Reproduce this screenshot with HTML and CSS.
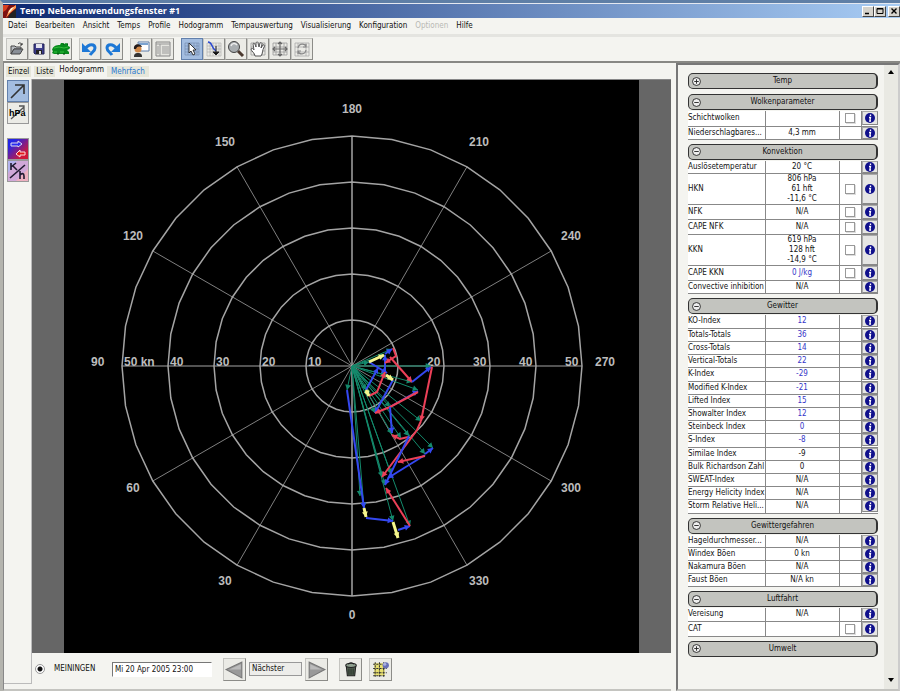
FILE: index.html
```html
<!DOCTYPE html>
<html lang="de">
<head>
<meta charset="utf-8">
<title>Temp Nebenanwendungsfenster #1</title>
<link rel="stylesheet" href="styles.css">
</head>
<body>
<header class="titlebar">
  <svg class="app-icon" viewBox="0 0 13 13" aria-hidden="true"><rect width="13" height="13" fill="#7c1010"/><path d="M0 0h6L3 5 0 7z" fill="#d84020"/><path d="M3 13 6 5l7-5v3L7 8z" fill="#ff9a50"/><path d="M5 8 8 3l3-1-4 5z" fill="#fff4d8"/><path d="M7 9l6-5v9H5z" fill="#222"/></svg>
  <h1>Temp Nebenanwendungsfenster #1</h1>
  <div class="win-buttons">
    <button aria-label="Minimieren"><svg viewBox="0 0 10 8"><path d="M2 6.500h4" stroke="#000" stroke-width="1.500"/></svg></button>
    <button aria-label="Maximieren"><svg viewBox="0 0 10 8"><path d="M2 1.500h6v5H2zM2 2h6" fill="none" stroke="#000"/></svg></button>
    <button aria-label="Schließen"><svg viewBox="0 0 10 8"><path d="M2.500 1.500l5 5m0-5l-5 5" stroke="#000" stroke-width="1.400"/></svg></button>
  </div>
</header>
<nav class="menubar">
  <button>Datei</button><button>Bearbeiten</button><button>Ansicht</button><button>Temps</button><button>Profile</button><button>Hodogramm</button><button>Tempauswertung</button><button>Visualisierung</button><button>Konfiguration</button><button disabled>Optionen</button><button>Hilfe</button>
</nav>
<div class="toolbar">
  <div class="group">
    <button aria-label="Öffnen"><svg viewBox="0 0 20 20"><path d="M4 7h4l1 1h5v2H7l-3 5z" fill="#b8bcc0" stroke="#444"/><path d="M4 15l3-5h9l-3 5z" fill="#8a9098" stroke="#444"/><path d="M11 5c2-2 3-1 4 1m0-2v2h-2" fill="none" stroke="#333"/></svg></button>
    <button aria-label="Speichern"><svg viewBox="0 0 20 20"><path d="M5 5h10v10H6l-1-1z" fill="#3c3c8c" stroke="#222255"/><path d="M7 5h6v4H7z" fill="#e4e4ee"/><path d="M7 11h6v4H7z" fill="#222"/><path d="M10 12h2v3h-2z" fill="#ddd"/></svg></button>
    <button aria-label="Frosch"><svg viewBox="0 0 20 20"><path d="M1 11c1-4 4-5 8-5l1-2h2l1 1 2-1 2 1v2l2 1c0 2-1 2-3 3l2 2v2H3l-2-1 1-2z" fill="#078a1c"/><path d="M3 9l5-1 5 1 4-1M3 13h3m3 0h4" stroke="#35bd3d" fill="none"/><path d="M12 5h1m3 0h1M6 15h2m4 0h2" stroke="#003c08"/></svg></button>
  </div>
  <div class="group">
    <button aria-label="Rückgängig"><svg viewBox="0 0 20 20"><path d="M5 10c4-6 10-5 10-1 0 3-3 4-5 7" fill="none" stroke="#1d78d6" stroke-width="3"/><path d="M2 4v9h9z" fill="#1d78d6"/></svg></button>
    <button aria-label="Wiederherstellen"><svg viewBox="0 0 20 20"><path d="M15 10C11 4 5 5 5 9c0 3 3 4 5 7" fill="none" stroke="#1d78d6" stroke-width="3"/><path d="M18 4v9H9z" fill="#1d78d6"/></svg></button>
  </div>
  <div class="group">
    <button aria-label="Präsentation"><svg viewBox="0 0 20 20"><path d="M7 3h11v9H8z" fill="#fff" stroke="#5d7da8"/><path d="M8 4h9v2H8z" fill="#7ba3d0"/><path d="M3 18c0-3 1-4 4-4s4 1 4 4z" fill="#333"/><circle cx="7" cy="10" r="3.500" fill="#d08848"/><path d="M3 10c-1-6 7-6 8-2-3-1-5-1-6 2z" fill="#231a18"/></svg></button>
    <button aria-label="Tabelle"><svg viewBox="0 0 20 20"><path d="M3 3h14v14H3z" fill="#e4e4df" stroke="#888"/><path d="M3 5h14M7 5v12M9 8h7M9 10h7M9 12h7M9 14h7M4 8h2m-2 2h2m-2 2h2m-2 2h2" stroke="#999"/></svg></button>
  </div>
  <div class="group modes">
    <button class="active" aria-label="Auswahl"><svg viewBox="0 0 20 20"><path d="M3 4h14v12H3zM3 7h14M3 10h14M3 13h14M6 4v12M9 4v12M12 4v12M15 4v12" fill="none" stroke="#7187a8" stroke-width=".6"/><path d="M7 4v10l2-2 2 4 2-1-2-4h3z" fill="#fff" stroke="#222" stroke-width=".9"/></svg></button>
    <button aria-label="Kurve verschieben"><svg viewBox="0 0 20 20"><path d="M3 4h14v13H3zM3 7h14M3 10h14M3 13h14M6 4v13M9 4v13M12 4v13M15 4v13" fill="none" stroke="#aaa" stroke-width=".6"/><path d="M4 3c5 0 2 5 8 9" fill="none" stroke="#2a48d0" stroke-width="1.500"/><path d="M12 7v7M9 13h6l-3 3z" fill="#111" stroke="#222"/></svg></button>
    <button aria-label="Zoom"><svg viewBox="0 0 20 20"><path d="M12 12l5 5" stroke="#4b3930" stroke-width="3"/><circle cx="8" cy="8" r="5.500" fill="#a8adb0" stroke="#444"/><path d="M5 7c1-3 4-3 6-1" fill="none" stroke="#eee" stroke-width="1.500"/></svg></button>
    <button aria-label="Hand"><svg viewBox="0 0 20 20"><path d="M3 4h14v12H3zM3 8h14M3 12h14M6 4v12M14 4v12" fill="none" stroke="#999" stroke-width=".8"/><path d="M7 17c0-3-4-5-4-7 1-2 3 1 3 1L5 5c1-2 2 0 3 3V4c1-2 2-1 2 0l1 4 1-4c1-1 2 0 2 1l-1 4 2-3c2-1 2 1 1 2-2 4-1 6-3 9z" fill="#fff" stroke="#444" stroke-width=".9"/></svg></button>
    <button aria-label="Verschieben"><svg viewBox="0 0 20 20"><path d="M3 4h14v12H3zM3 8h14M3 13h14M6 4v12M14 4v12" fill="none" stroke="#999" stroke-width=".8"/><path d="M10 3v14M3 10h14M8 5l2-2 2 2M8 15l2 2 2-2M5 8l-2 2 2 2m10-4 2 2-2 2" fill="none" stroke="#666" stroke-width="1.200"/></svg></button>
    <button aria-label="Drehen"><svg viewBox="0 0 20 20"><path d="M3 4h14v13H3zM3 8h14M3 13h14M6 4v13M14 4v13" fill="none" stroke="#aaa" stroke-width=".8"/><path d="M6 9c1-5 7-5 8-1m0-3v3h-3M14 11c-1 5-7 5-8 1m0 3v-3h3" fill="none" stroke="#888" stroke-width="1.200"/></svg></button>
  </div>
</div>
<main class="workspace">
  <section class="left">
    <div class="tabs" role="tablist">
      <button role="tab">Einzel</button><button role="tab">Liste</button><button role="tab" class="current" aria-selected="true">Hodogramm</button><button role="tab" class="blue">Mehrfach</button>
    </div>
    <div class="view">
      <div class="sidebar">
        <button class="active" aria-label="Windpfeil"><svg viewBox="0 0 20 20"><path d="M3 17 16 4M7 4h9v9" fill="none" stroke="#333" stroke-width="1.600"/></svg></button>
        <button aria-label="Druck in hPa"><svg viewBox="0 0 20 20"><path d="M3 16 16 4M11 3h5v5" fill="none" stroke="#555" stroke-width="1.300"/><text x="1" y="13" class="hpa">hPa</text></svg></button>
        <button class="colored gap" aria-label="Advektion"><svg viewBox="0 0 20 20"><defs><linearGradient id="adv" x1="0" y1="0" x2="1" y2="1"><stop offset="0.200" stop-color="#2424e4"/><stop offset="0.800" stop-color="#d01838"/></linearGradient></defs><path d="M0 0h20v20H0z" fill="url(#adv)"/><path d="M3 4h7V2l4 3-4 3V7H3z" fill="#2a2af0" stroke="#dde"/><path d="M17 13h-5v-2l-4 4 4 3v-2h5z" fill="#e01818" stroke="#fdd"/></svg></button>
        <button class="colored" aria-label="Kelvin pro Stunde"><svg viewBox="0 0 20 20"><path d="M0 0h20v20H0z" fill="#d0a8d8"/><path d="M0 0h9L0 12z" fill="#b4b4ee"/><path d="M20 20V8L8 20z" fill="#eeb0c0"/><path d="M3 2v7M3 6l5-4M5 5l4 4M2 17 17 4M12 10v8m0-4c2-2 4-2 4 1v3" fill="none" stroke="#201a30" stroke-width="1.600"/></svg></button>
      </div>
      <div class="plot">
        <div class="chart">
          <svg id="hodograph" viewBox="-288 -286 575 573" role="img" aria-label="Hodogramm"></svg>
        </div>
        <form class="controls">
          <label class="station"><input type="radio" name="station" checked>MEININGEN</label>
          <input class="date" type="text" value="Mi 20 Apr 2005 23:00" aria-label="Termin">
          <div class="stepper">
            <button type="button" class="square" aria-label="Zurück"><svg viewBox="0 0 20 20"><path d="M17 3v15L2 10z" fill="#999" stroke="#777"/><path d="M16 5v5H5z" fill="#bbb"/></svg></button>
            <button type="button" class="next">Nächster</button>
            <button type="button" class="square" aria-label="Vor"><svg viewBox="0 0 20 20"><path d="M3 3v15l15-8z" fill="#999" stroke="#777"/><path d="M4 5v5h11z" fill="#bbb"/></svg></button>
          </div>
          <button type="button" class="square" aria-label="Löschen"><svg viewBox="0 0 20 20"><path d="M6 7h9l-1 9H7z" fill="#526052" stroke="#222"/><ellipse cx="10.500" cy="6" rx="5" ry="2" fill="#8fa08f" stroke="#222"/><path d="M8.500 9v6m2-6v6m2-6v6" stroke="#263026"/><path d="M8 5c1-2 4-2 5 0" stroke="#222" fill="none"/></svg></button>
          <button type="button" class="square" aria-label="Karte"><svg viewBox="0 0 20 20"><path d="M4 4h10v12H4z" fill="#e8e070"/><path d="M3 5h11M3 9h13M3 13h13M3 16h11M5 3v14M9 3v14M13 3v14" stroke="#333" stroke-dasharray="2 1"/><circle cx="15" cy="6" r="3" fill="#6870b8"/><circle cx="14" cy="5" r="1.500" fill="#aab0e0"/></svg></button>
        </form>
      </div>
    </div>
  </section>
  <aside class="right">
    <div class="sections" id="sections"></div>
    <div class="scroll"><button aria-label="Nach oben"><svg viewBox="0 0 8 4"><path d="M1 4l3-4 3 4z"/></svg></button><button aria-label="Nach unten"><svg viewBox="0 0 8 4"><path d="M1 0l3 4 3-4z"/></svg></button></div>
  </aside>
</main>
<script src="app.js"></script>
</body>
</html>
```
FILE: styles.css
```css
* { box-sizing: border-box; }
body {
  margin: 0;
  min-height: 100vh;
  display: flex;
  flex-direction: column;
  background: #f4f4f0;
  border-top: 3px solid #5f7fa6;
  border-left: 3px solid #b4b4ae;
  color: #111;
  font: 8px/10px "DejaVu Sans Condensed", "DejaVu Sans", sans-serif;
}
button, input { font: inherit; color: inherit; margin: 0; }
button { padding: 0; border: 0; background: none; }
svg { display: block; }

.titlebar {
  display: flex;
  align-items: center;
  height: 15px;
  background: linear-gradient(90deg, #0c2870, #a8ccf4);
  border-top: 1px solid #e4e8f0;
}
.app-icon { width: 13px; height: 13px; }
.titlebar h1 {
  flex: 1;
  margin: 0 0 0 4px;
  color: #fff;
  font: bold 8px/12px "Open Sans", "DejaVu Sans Condensed", sans-serif;
  font-size: 9px;
}
.win-buttons { display: flex; }
.win-buttons button {
  width: 12px;
  height: 11px;
  background: #d6d3cc;
  border: 1px solid;
  border-color: #fff #444 #444 #fff;
}
.win-buttons button:last-child { margin-left: 2px; }

.menubar {
  display: flex;
  gap: 8px;
  height: 19px;
  padding: 0 5px;
  border-bottom: 3px solid #e4e4e0;
}
.menubar button:disabled { color: #b8b8b4; }

.toolbar {
  display: flex;
  gap: 7px;
  height: 26px;
  padding: 1px 3px;
  border-bottom: 2px solid #888884;
}
.group { display: flex; }
.group button, .square {
  width: 22px;
  height: 22px;
  padding: 0;
  background: #ebebe6;
  border: 1px solid;
  border-color: #c4c4c0 #8c8c88 #8c8c88 #c4c4c0;
}
.group button svg, .square svg { width: 100%; height: 100%; }
.group .active, .sidebar .active { background: #a3bde0; border-color: #6280ac; }

.workspace { flex: 1; display: flex; gap: 5px; }
.left { flex: 1; min-width: 0; display: flex; flex-direction: column; border-left: 1px solid #888; border-bottom: 2px solid #c4c4c0; }
.tabs { display: flex; align-items: flex-end; gap: 3px; height: 16px; padding: 0 2px 2px; }
.tabs button { height: 11px; padding: 0 2px; background: #e6e6da; }
.tabs .current { height: 14px; padding: 0 0 0 1px; background: none; }
.tabs .blue { padding: 0 4px; color: #2878d0; }
.view { flex: 1; display: flex; }
.sidebar { width: 28px; margin-bottom: 5px; padding: 1px 3px; border-right: 1px solid #bbb; border-bottom: 1px solid #bbb; }
.sidebar button {
  display: block;
  width: 22px;
  height: 22px;
  background: #ebebe6;
  border: 1px solid #999;
}
.sidebar .gap { margin-top: 14px; }
.sidebar svg { width: 100%; height: 100%; }
.hpa { font: bold 9px "Liberation Sans", sans-serif; }
.plot { flex: 1; min-width: 0; display: flex; flex-direction: column; }
.chart { flex: 1; display: flex; padding: 0 32px; background: #666; border-top: 1px solid #888; }
.chart svg { width: 100%; background: #000; }
.ring { fill: none; stroke: #a4a4a4; stroke-width: 1.5; }
.spoke { stroke: #a0a0a0; stroke-width: 0.8; }
.meridian { stroke: #a4a4a4; stroke-width: 1.5; }
.axis { stroke: #a4a4a4; }
.scale { fill: #bcbcbc; font: bold 12px "Liberation Sans", sans-serif; }
.middle { text-anchor: middle; }
.vector { fill: none; }
.green { stroke: #148a6c; stroke-width: 1; }
.shear { stroke-width: 2; }
.blue-line { stroke: #3448f0; }
.red-line { stroke: #ec4058; }
.yellow-line { stroke: #f6f68c; stroke-width: 3; }

.controls { display: flex; align-items: center; height: 36px; padding: 0 3px 4px; }
.station { display: flex; align-items: center; gap: 9px; width: 77px; }
.station input {
  appearance: none;
  width: 10px;
  height: 10px;
  border: 1px solid #999;
  border-radius: 50%;
  background: radial-gradient(#111 0 2px, #fff 3px);
}
.date { width: 100px; height: 15px; padding: 0 2px; background: #fff; border: 1px solid; border-color: #777 #fff #fff #777; }
.stepper { display: flex; align-items: center; gap: 3px; margin: 0 11px; }
.next { width: 53px; height: 14px; padding-left: 2px; text-align: left; background: #ededea; border: 1px solid #999; }
.controls .square { width: 23px; height: 23px; }
.controls > .square + .square { margin-left: 7px; }

.right { display: flex; width: 224px; border: 2px solid #777; border-right-color: #ccc; border-bottom-color: #c4c4c0; }
.sections { flex: 1; min-width: 0; padding: 8px 6px 0 10px; }
.section { margin-bottom: 4px; }
.section.closed { margin-bottom: 5px; }
.section-head {
  display: grid;
  grid-template-columns: 10px 1fr 10px;
  align-items: center;
  width: 100%;
  height: 16px;
  padding: 0 3px;
  background: #c3c4bf;
  border: 1px solid #333;
  border-right-width: 2px;
  border-radius: 5px;
}
.section-head svg { width: 9px; height: 9px; fill: #eee; stroke: #222; }
.params { width: 100%; margin-top: 1px; border-collapse: collapse; table-layout: fixed; background: #fff; }
.params th, .params td { height: 13px; padding: 0; border-bottom: 1px solid #888; vertical-align: middle; }
.params th { width: 77px; font-weight: normal; text-align: left; white-space: nowrap; }
.params td { border-left: 1px solid #888; text-align: center; }
.params tr:nth-child(5n) td { height: 14px; }
.params tr.check td { height: 15px; }
.params .tick { width: 22px; }
.params .info { width: 17px; }
.params .linked { color: #3535c8; }
.tick input { display: block; appearance: none; width: 10px; height: 10px; margin: 0 auto; background: #fff; border: 1px solid #999; box-shadow: 1px 1px #ddd; }
.params .info button { display: grid; place-items: center; width: 100%; height: 12px; background: #e6e6e4; border: 1px solid; border-color: #aaa #888 #888 #aaa; }
.params .check .info button { height: 14px; }
.params .tall .info button { height: 30px; }
.info svg { width: 10px; height: 10px; }
.scroll { display: flex; flex-direction: column; justify-content: space-between; align-items: center; width: 14px; padding: 5px 0 7px; background: #e9e9e3; }
.scroll svg { width: 8px; height: 4px; }
```
FILE: app.js
```js
// Each row: label, value, has checkbox, value shown in blue
const sections = [
  ["Temp"],
  ["Wolkenparameter", [["Schichtwolken", "", 1], ["Niederschlagbares...", "4,3 mm"]]],
  ["Konvektion", [
    ["Auslösetemperatur", "20 °C"],
    ["HKN", "806 hPa<br>61 hft<br>-11,6 °C", 1],
    ["NFK", "N/A", 1], ["CAPE NFK", "N/A", 1],
    ["KKN", "619 hPa<br>128 hft<br>-14,9 °C", 1],
    ["CAPE KKN", "0 J/kg", 1, 1], ["Convective inhibition", "N/A"]]],
  ["Gewitter", [
    ["KO-Index", "12", 0, 1], ["Totals-Totals", "36", 0, 1], ["Cross-Totals", "14", 0, 1],
    ["Vertical-Totals", "22", 0, 1], ["K-Index", "-29", 0, 1], ["Modified K-Index", "-21", 0, 1],
    ["Lifted Index", "15", 0, 1], ["Showalter Index", "12", 0, 1], ["Steinbeck Index", "0", 0, 1],
    ["S-Index", "-8", 0, 1], ["Similae Index", "-9"], ["Bulk Richardson Zahl", "0"],
    ["SWEAT-Index", "N/A"], ["Energy Helicity Index", "N/A"], ["Storm Relative Heli...", "N/A"]]],
  ["Gewittergefahren", [["Hageldurchmesser...", "N/A"], ["Windex Böen", "0 kn"],
    ["Nakamura Böen", "N/A"], ["Faust Böen", "N/A kn"]]],
  ["Luftfahrt", [["Vereisung", "N/A"], ["CAT", "", 1]]],
  ["Umwelt"]
];
const info = '<svg viewBox="0 0 10 10"><circle cx="5" cy="5" r="5" fill="#10108c"/><path d="M5.500 1.500v1.500M4 4.500h1.500L4.800 8H6" fill="none" stroke="#fff" stroke-width="1.300"/></svg>';
const row = ([label, value, check, linked]) => {
  const tall = value.includes("<br>");
  return `<tr class="${check ? "check" : ""} ${tall ? "tall" : ""}"><th scope="row">${label}</th>
  <td class="${linked ? "linked" : ""}">${value}</td>
  <td class="tick">${check ? `<input type="checkbox" aria-label="${label}">` : ""}</td>
  <td class="info"><button aria-label="Info ${label}">${info}</button></td></tr>`;
};
document.getElementById("sections").innerHTML = sections.map(([name, rows]) => `
  <section class="section ${rows ? "" : "closed"}">
    <button class="section-head" aria-expanded="${!!rows}">
      <svg viewBox="0 0 10 10"><circle cx="5" cy="5" r="4.400"/><path d="M2.500 5h5${rows ? "" : "M5 2.500v5"}"/></svg>
      <span>${name}</span>
    </button>
    ${rows ? `<table class="params"><tbody>${rows.map(row).join("")}</tbody></table>` : ""}
  </section>`).join("");

// Hodograph: origin in the middle, 46 units per 10 kn
const polar = (r, deg) => {
  const a = deg * Math.PI / 180;
  return [(r * Math.sin(a)).toFixed(1), (r * Math.cos(a)).toFixed(1)];
};
let out = "";
for (let r = 46; r <= 230; r += 46) {
  const pts = Array.from({ length: 36 }, (_, i) => polar(r, i * 10).join());
  out += `<polygon class="ring" points="${pts.join(" ")}"/>`;
}
for (let a = 0; a < 360; a += 30) {
  const [x, y] = polar(230, a);
  const kind = a % 180 === 0 ? "meridian" : a % 90 === 0 ? "axis" : "spoke";
  out += `<line class="${kind}" x2="${x}" y2="${y}"/>`;
}
const label = (x, y, t, cls = "") => `<text class="scale ${cls}" x="${x}" y="${y}">${t}</text>`;
[[0, -253, 180], [-127, -220, 150], [127, -220, 210], [219, -126, 240], [-219, -126, 120],
 [-219, 126, 60], [219, 126, 300], [-127, 219, 30], [127, 219, 330], [0, 253, 0]]
  .forEach(([x, y, t]) => out += label(x, y, t, "middle"));
[[-261, 90], [-228, "50 kn"], [-182, 40], [-136, 30], [-90, 20], [-44, 10],
 [75, 20], [121, 30], [167, 40], [213, 50], [243, 270]]
  .forEach(([x, t]) => out += label(x, 0, t));

const colors = { green: "#148a6c", "blue-line": "#3448f0", "red-line": "#ec4058", "yellow-line": "#f6f68c" };
function arrow(cls, pts, head = 6) {
  const [x1, y1] = pts[pts.length - 2], [x2, y2] = pts[pts.length - 1];
  const a = Math.atan2(y2 - y1, x2 - x1);
  const at = s => `${(x2 - head * Math.cos(a + s)).toFixed(1)},${(y2 - head * Math.sin(a + s)).toFixed(1)}`;
  return `<polyline class="vector ${cls === "green" ? "" : "shear"} ${cls}" points="${pts.join(" ")}"/>` +
    `<polygon fill="${colors[cls]}" points="${x2},${y2} ${at(0.5)} ${at(-0.5)}"/>`;
}
[[-5, 24], [17, -4], [40, -17], [79, 0], [60, 16], [66, 24], [69, 55], [81, 82], [73, 88], [57, 70],
 [49, 72], [40, 68], [30, 111], [33, 119], [39, 108], [41, 155], [58, 160], [12, 142], [8, 130],
 [14, 24], [23, 47], [34, 9], [38, 41], [17, 30], [33, -11]]
  .forEach(p => out += arrow("green", [[0, 0], p]));
[
  ["blue-line", [[33, 7], [33, -11]]], ["blue-line", [[17, -4], [35, 7]]],
  ["blue-line", [[33, -12], [40, -17]]], ["red-line", [[41, -18], [44, -10], [33, -3]]],
  ["red-line", [[38, -9], [60, 16]]], ["blue-line", [[60, 16], [79, 1]]],
  ["red-line", [[80, 1], [69, 55]]], ["red-line", [[69, 55], [65, 64], [30, 111]]],
  ["blue-line", [[41, 14], [23, 47]]], ["blue-line", [[38, 41], [66, 25]]],
  ["red-line", [[66, 26], [38, 41], [23, 47]]], ["blue-line", [[38, 41], [40, 67]]],
  ["red-line", [[56, 71], [48, 73], [40, 69]]], ["blue-line", [[57, 70], [33, 119]]],
  ["blue-line", [[14, 24], [26, 2]]], ["red-line", [[17, 30], [25, 26], [33, 6]]],
  ["blue-line", [[-5, 24], [12, 142]]], ["blue-line", [[14, 152], [41, 155]]],
  ["blue-line", [[46, 164], [58, 160]]], ["red-line", [[58, 160], [34, 122]]],
  ["blue-line", [[73, 89], [36, 112]]], ["blue-line", [[73, 88], [81, 82]]],
  ["red-line", [[73, 90], [46, 96]]],
  ["yellow-line", [[17, -4], [32, -11]]], ["yellow-line", [[34, 9], [41, 14]]],
  ["yellow-line", [[14, 24], [17, 30]]], ["yellow-line", [[12, 142], [14, 151]]],
  ["yellow-line", [[41, 156], [46, 172]]]
].forEach(([c, p]) => out += arrow(c, p));
document.getElementById("hodograph").innerHTML = out;
```
